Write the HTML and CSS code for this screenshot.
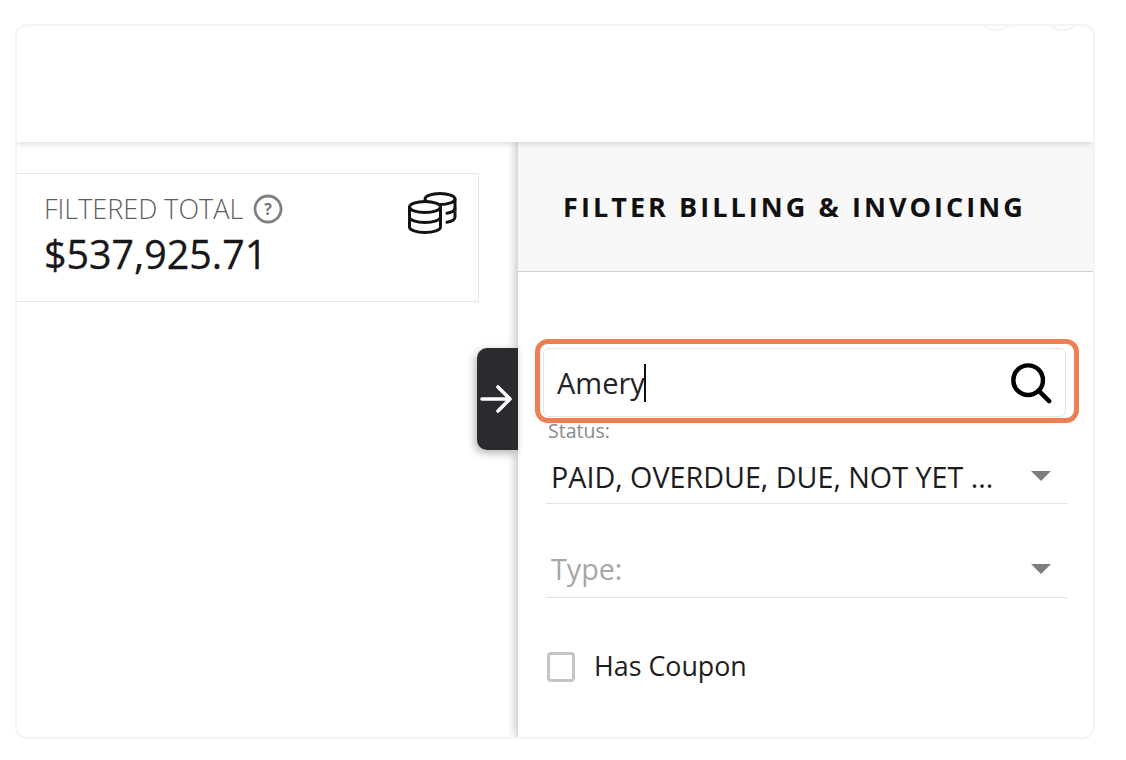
FILE: index.html
```html
<!DOCTYPE html>
<html lang="en">
<head>
<meta charset="utf-8">
<title>Filter Billing &amp; Invoicing</title>
<link rel="stylesheet" href="styles.css">
</head>
<body>
<div class="card">
  <header class="topbar">
    <span class="round"></span>
    <span class="round"></span>
  </header>
  <div class="content">
    <main class="main">
      <section class="stat">
        <div class="stat-text">
          <div class="stat-label">FILTERED TOTAL
            <svg class="help" viewBox="0 0 30 30" width="30" height="30"><circle cx="15" cy="15" r="13" fill="none" stroke="#808080" stroke-width="2.8"/><text x="15" y="20.5" text-anchor="middle" class="help-mark">?</text></svg>
          </div>
          <div class="stat-value">$537,925.71</div>
        </div>
        <svg class="coins" viewBox="0 0 52 46" width="52" height="46" fill="none" stroke="#111" stroke-width="3" stroke-linecap="round" stroke-linejoin="round">
          <ellipse cx="33" cy="10" rx="15" ry="5.500"/>
          <path d="M48 10v18c0 2.400-3 4.400-8 5.200"/>
          <path d="M48 19c0 2.400-3 4.400-8 5.200"/>
          <path d="M2.500 18v20c0 3 7 5.500 15.500 5.500s15.500-2.500 15.500-5.500V18z" fill="#fff"/>
          <ellipse cx="18" cy="18" rx="15.500" ry="5.500" fill="#fff"/>
          <path d="M2.500 28c0 3 7 5.500 15.500 5.500s15.500-2.500 15.500-5.500"/>
        </svg>
      </section>
    </main>
    <aside class="filters">
      <button class="toggle" type="button" aria-label="Collapse">
        <svg viewBox="0 0 34 30" width="34" height="30" fill="none" stroke="#fff" stroke-width="3.6" stroke-linecap="round" stroke-linejoin="round"><path d="M3 15h28M19 3l12 12-12 12"/></svg>
      </button>
      <div class="filters-head">FILTER BILLING &amp; INVOICING</div>
      <div class="filters-body">
        <div class="search">
          <span class="search-value">Amery</span><span class="caret"></span>
          <svg class="search-icon" viewBox="0 0 44 44" width="42" height="42" fill="none" stroke="#000" stroke-width="4.6" stroke-linecap="round"><circle cx="19" cy="19" r="15.500"/><path d="M30.500 30.500L41 41"/></svg>
          <span class="highlight"></span>
        </div>
        <div class="field field-status">
          <div class="field-label">Status:</div>
          <div class="field-row">
            <span class="field-value">PAID, OVERDUE, DUE, NOT YET ...</span>
            <span class="arrow"></span>
          </div>
        </div>
        <div class="field field-type">
          <div class="field-row">
            <span class="field-placeholder">Type:</span>
            <span class="arrow"></span>
          </div>
        </div>
        <label class="check">
          <span class="box"></span>
          <span class="check-text">Has Coupon</span>
        </label>
      </div>
    </aside>
  </div>
</div>
</body>
</html>
```

FILE: styles.css
```css
* { box-sizing: border-box; }
html, body { margin: 0; height: 100%; background: #fff; }
body {
  padding: 24px 31px 21px 15px;
  font-family: "Open Sans", "Liberation Sans", sans-serif;
  color: #1c1c1e;
  overflow: hidden;
}
.card {
  height: 715px;
  border: 2px solid #f4f4f6;
  border-radius: 12px;
  background: #fff;
  overflow: hidden;
  display: flex;
  flex-direction: column;
}
.topbar {
  height: 116px;
  flex: none;
  display: flex;
  justify-content: flex-end;
  gap: 26px;
  padding-right: 10px;
  position: relative;
  z-index: 2;
  background: #fff;
  box-shadow: 0 2px 6px rgba(0, 0, 0, .14);
  overflow: hidden;
}
.round {
  width: 40px;
  height: 40px;
  margin-top: -35px;
  border: 2px solid #f4f4f6;
  border-radius: 50%;
}
.content { flex: 1; display: flex; min-height: 0; }
.main { width: 500px; flex: none; padding-top: 31px; }
.stat {
  width: 462px;
  height: 129px;
  border: 1px solid #e6e6e8;
  border-left: 0;
  padding: 19px 20px 0 27px;
  display: flex;
  justify-content: space-between;
  align-items: flex-start;
}
.stat-label {
  font-size: 27px;
  font-weight: 300;
  line-height: 32px;
  color: #5e5e5e;
  display: flex;
  align-items: center;
  gap: 10px;
  white-space: nowrap;
}
.help-mark { font-size: 16px; font-weight: 700; fill: #777; }
.stat-value {
  font-size: 39.400px;
  line-height: 50px;
  margin-top: 4px;
  color: #17171a;
  white-space: nowrap;
  -webkit-text-stroke: .3px #17171a;
}
.coins { margin-top: -4px; margin-right: -1px; }
.filters {
  flex: 1;
  position: relative;
  border-left: 1px solid #d8d8d8;
  box-shadow: -3px 0 8px rgba(0, 0, 0, .18);
  background: #fff;
}
.toggle {
  position: absolute;
  left: -41px;
  top: 206px;
  width: 41px;
  height: 102px;
  padding: 0 0 0 2px;
  border: 0;
  border-radius: 10px 0 0 10px;
  background: #2a2a2f;
  box-shadow: -2px 3px 8px rgba(0, 0, 0, .3);
  display: flex;
  align-items: center;
  justify-content: flex-start;
}
.filters-head {
  height: 130px;
  padding: 45px 0 0 45px;
  background: #f8f8f8;
  border-bottom: 1px solid #cfcfcf;
  font-size: 27px;
  font-weight: 700;
  line-height: 40px;
  letter-spacing: 3.06px;
  color: #111;
  white-space: nowrap;
}
.filters-body { padding: 76px 26px 0 25px; }
.search {
  position: relative;
  width: 523px;
  height: 69px;
  border: 1px solid #e4e4e6;
  border-radius: 6px;
  display: flex;
  align-items: center;
  padding: 0 13px 0 13px;
  font-size: 29px;
  color: #222;
}
.caret { width: 2px; height: 38px; background: #111; margin-left: -1px; }
.search-icon { margin-left: auto; }
.highlight {
  position: absolute;
  inset: -10px -14px -7px -9px;
  border: 5px solid #ee7f52;
  border-radius: 13px;
  pointer-events: none;
}
.field { width: 521px; margin-left: 3px; border-bottom: 1px solid #e2e2e4; }
.field-status { height: 87px; padding-top: 2px; }
.field-type { height: 94px; padding-top: 40px; }
.field-label { font-size: 19.500px; line-height: 24px; color: #8a8a8a; padding-left: 2px; }
.field-row {
  display: flex;
  justify-content: space-between;
  align-items: center;
  padding: 0 16px 0 5px;
  height: 50px;
  margin-top: 8px;
  font-size: 28.700px;
  white-space: nowrap;
}
.field-type .field-row { height: 48px; margin-top: 0; }
.field-type .arrow { margin-top: 2px; }
.field-placeholder { color: #a6a6a6; }
.arrow {
  width: 0;
  height: 0;
  border-left: 10px solid transparent;
  border-right: 10px solid transparent;
  border-top: 10px solid #7d7d7d;
}
.check { display: flex; align-items: center; gap: 19px; margin: 54px 0 0 4px; }
.box {
  width: 28px;
  height: 30px;
  border: 3px solid #c4c4c4;
  border-radius: 4px;
  background: #fff;
}
.check-text { font-size: 26.800px; line-height: 30px; color: #1c1c1e; margin-top: -2px; }
```
